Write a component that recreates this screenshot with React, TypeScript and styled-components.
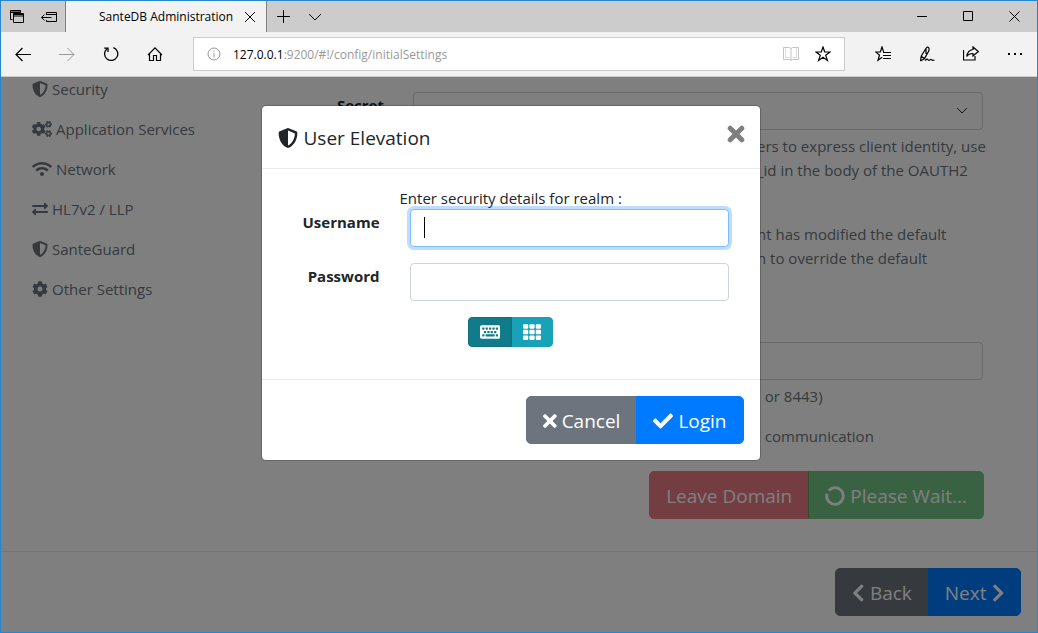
import React from "react";
import styled, { createGlobalStyle, css } from "styled-components";
import {
  FaCheck,
  FaChevronLeft,
  FaChevronRight,
  FaCog,
  FaCogs,
  FaExchangeAlt,
  FaKeyboard,
  FaShieldAlt,
  FaTh,
  FaTimes,
  FaWifi,
} from "react-icons/fa";

const GlobalStyle = createGlobalStyle`
  *, *::before, *::after { box-sizing: border-box; }
  body {
    margin: 0;
    font-family: "Open Sans", "Noto Sans", sans-serif;
    font-size: 15px;
    line-height: 24px;
    color: #212529;
    background: #fff;
  }
  button, input, select { font: inherit; margin: 0; }
`;

const BrowserWindow = styled.div`
  display: flex;
  flex-direction: column;
  min-height: 100vh;
  border: 1px solid #2587d3;
`;

/* Icons whose drawing is not square keep their own proportions */

const CogsIcon = styled(FaCogs)`
  aspect-ratio: 640 / 512;
`;
const WifiIcon = styled(FaWifi)`
  aspect-ratio: 640 / 512;
`;
const TimesIcon = styled(FaTimes)`
  aspect-ratio: 352 / 512;
`;
const BackIcon = styled(FaChevronLeft)`
  aspect-ratio: 320 / 512;
`;
const NextIcon = styled(FaChevronRight)`
  aspect-ratio: 320 / 512;
`;
const KeyboardIcon = styled(FaKeyboard)`
  aspect-ratio: 576 / 512;
`;

/* Browser chrome */

const TabBar = styled.div`
  display: flex;
  height: 31px;
  background: #ccc;
`;

const ChromeButton = styled.button<{ $width: number }>`
  display: flex;
  flex: none;
  align-items: center;
  justify-content: center;
  width: ${(p) => p.$width}px;
  padding: 0;
  border: 0;
  background: none;
  color: #000;

  &:disabled { color: #999; }
`;

const Tab = styled.div`
  display: flex;
  align-items: center;
  width: 202px;
  padding-left: 33px;
  border: solid #7f7f7f;
  border-width: 0 1px;
  background: #f2f2f2;
`;

const TabTitle = styled.span`
  flex: 1;
  overflow: hidden;
  white-space: nowrap;
  font-size: 12px;
  color: #000;
`;

const WindowControls = styled.div`
  display: flex;
  margin-left: auto;
`;

const Toolbar = styled.div`
  display: flex;
  height: 45px;
  border-bottom: 1px solid #ccc;
  background: #f2f2f2;
`;

const AddressBar = styled.div`
  display: flex;
  flex: 1;
  align-items: center;
  min-width: 0;
  height: 34px;
  margin: 5px 16px;
  padding: 0 5px 0 13px;
  border: 1px solid #ccc;
  background: #fff;
  font-size: 12px;
  color: #999;
`;

const Url = styled.span`
  flex: 1;
  margin-left: 12px;
  padding-top: 1px;
  overflow: hidden;
  white-space: nowrap;
`;

const UrlHost = styled.span`
  color: #000;
`;

/* Page */

const Page = styled.main`
  position: relative;
  display: flex;
  flex: 1;
  flex-direction: column;
  overflow: hidden;
`;

const Content = styled.div`
  display: flex;
  flex: 1;
  padding: 0 54px 32px 31px;
`;

const SideNav = styled.nav`
  display: flex;
  flex: none;
  flex-direction: column;
  gap: 16px;
  width: 220px;
`;

const iconStyle = css<{ $icon: number }>`
  & svg {
    flex: none;
    width: auto;
    height: ${(p) => p.$icon}px;
  }
`;

const NavLink = styled.a<{ $icon: number }>`
  display: flex;
  align-items: center;
  gap: 4px;
  color: #6c757d;
  text-decoration: none;
  ${iconStyle}
`;

const Settings = styled.form`
  display: grid;
  flex: 1;
  grid-template-columns: 132px minmax(0, 1fr);
  column-gap: 29px;
  align-content: start;
  min-width: 0;
  padding-top: 15px;
`;

const FieldLabel = styled.label`
  padding-top: 1px;
  text-align: right;
  font-weight: 700;
`;

const controlStyle = css`
  width: 100%;
  height: 38px;
  padding: 6px 12px;
  border: 1px solid #ced4da;
  border-radius: 4px;
  background: #fff;
  color: #495057;
`;

const SelectWrap = styled.div`
  position: relative;
`;

const Select = styled.select`
  ${controlStyle}
  appearance: none;
`;

const SelectArrow = styled.svg`
  position: absolute;
  top: 14px;
  right: 14px;
  pointer-events: none;
`;

const Input = styled.input`
  ${controlStyle}

  &:focus {
    border-color: #80bdff;
    box-shadow: 0 0 0 3px rgba(0, 123, 255, 0.25);
    outline: 0;
    caret-color: transparent;
  }
`;

const Hint = styled.p<{ $gap: number }>`
  grid-column: 2;
  margin: ${(p) => p.$gap}px 0 0 344px;
  white-space: nowrap;
  color: #6c757d;
`;

const PortField = styled.div`
  grid-column: 2;
  margin-top: 72px;
`;

const ButtonGroup = styled.div`
  display: flex;

  & > :not(:first-child) {
    margin-left: -1px;
    border-top-left-radius: 0;
    border-bottom-left-radius: 0;
  }
  & > :not(:last-child) {
    border-top-right-radius: 0;
    border-bottom-right-radius: 0;
  }
`;

const DomainActions = styled(ButtonGroup)`
  grid-column: 2;
  justify-content: flex-end;
  margin: 23px -1px 0 0;
`;

const tones = {
  secondary: "#6c757d",
  primary: "#007bff",
  danger: "#dc3545",
  success: "#28a745",
};

const Button = styled.button<{ $tone: keyof typeof tones; $icon: number }>`
  display: flex;
  align-items: center;
  gap: 5px;
  height: 48px;
  padding: 2px 16px 0;
  border: 1px solid ${(p) => tones[p.$tone]};
  border-radius: 5px;
  background: ${(p) => tones[p.$tone]};
  color: #fff;
  font-size: 19px;
  white-space: nowrap;
  ${iconStyle}

  &:disabled { opacity: 0.65; }
`;

const WizardFooter = styled.footer`
  display: flex;
  justify-content: flex-end;
  padding: 16px;
  border-top: 1px solid #e9ecef;
`;

/* Dialog */

const Backdrop = styled.div`
  position: absolute;
  inset: 0;
  padding: 28px 17px 28px 0;
  background: rgba(0, 0, 0, 0.5);
`;

const Dialog = styled.section`
  max-width: 500px;
  margin: 0 auto;
  border: 1px solid rgba(0, 0, 0, 0.2);
  border-radius: 5px;
  background: #fff;
  background-clip: padding-box;
`;

const DialogHeader = styled.header`
  display: flex;
  align-items: flex-start;
  justify-content: space-between;
  padding: 16px 15px 16px 16px;
  border-bottom: 1px solid #e9ecef;
`;

const DialogTitle = styled.h5<{ $icon: number }>`
  display: flex;
  align-items: center;
  gap: 6px;
  height: 30px;
  margin: 0;
  padding-top: 2px;
  font-size: 19px;
  font-weight: 400;
  line-height: 30px;
  ${iconStyle}
`;

const CloseButton = styled.button`
  display: flex;
  padding: 3px 0;
  border: 0;
  background: none;
  color: #7f7f7f;
`;

const DialogBody = styled.div`
  padding: 16px 31px 32px 16px;
`;

const Intro = styled.p`
  height: 24px;
  margin: 0 0 0 122px;
  padding-top: 1px;
`;

const LoginRow = styled.div`
  display: grid;
  grid-template-columns: 102px 1fr;
  column-gap: 30px;
  margin-bottom: 16px;
`;

const FocusedField = styled.div`
  position: relative;

  &::after {
    content: "";
    position: absolute;
    top: 8px;
    left: 14px;
    width: 1px;
    height: 21px;
    background: #000;
  }
`;

const InputModes = styled(ButtonGroup)`
  justify-content: center;
  margin-right: -15px;
`;

const ModeButton = styled.button<{ $active?: boolean; $icon: number }>`
  position: relative;
  z-index: ${(p) => (p.$active ? 1 : 0)};
  display: flex;
  align-items: center;
  height: 30px;
  padding: 0 11px;
  border: 1px solid ${(p) => (p.$active ? "#10707f" : "#17a2b8")};
  border-radius: 4px;
  background: ${(p) => (p.$active ? "#117a8b" : "#17a2b8")};
  color: #fff;
  ${iconStyle}
`;

const DialogFooter = styled.footer`
  display: flex;
  justify-content: flex-end;
  padding: 16px;
  border-top: 1px solid #e9ecef;
`;

type GlyphProps = { size: number; children: React.ReactNode; weight?: number };

const Glyph = ({ size, children, weight = 1 }: GlyphProps) => (
  <svg
    width={size}
    height={size}
    viewBox={`0 0 ${size} ${size}`}
    fill="none"
    stroke="currentColor"
    strokeWidth={weight}
    aria-hidden="true"
  >
    {children}
  </svg>
);

const navItems = [
  { label: "Security", Icon: FaShieldAlt },
  { label: "Application Services", Icon: CogsIcon },
  { label: "Network", Icon: WifiIcon },
  { label: "HL7v2 / LLP", Icon: FaExchangeAlt },
  { label: "SanteGuard", Icon: FaShieldAlt },
  { label: "Other Settings", Icon: FaCog },
];

const BrowserTabs = () => (
  <TabBar>
    <ChromeButton $width={32} aria-label="Tabs set aside">
      <Glyph size={16}>
        <path d="M3.5 10.5h-2v-9h10v2M1.5 3.5h10" />
        <path d="M4.5 4.5h10v9h-10zM4.5 7h10" />
        <path d="M1.5 2h10M4.5 5.5h10" />
      </Glyph>
    </ChromeButton>
    <ChromeButton $width={32} aria-label="Set these tabs aside">
      <Glyph size={16}>
        <path d="M5.5 6V3.500h10v9h-10V11M5.500 5.500h10M0.500 8.500h10M3.500 5.500l-3 3 3 3" />
      </Glyph>
    </ChromeButton>
    <Tab>
      <TabTitle>SanteDB Administration</TabTitle>
      <ChromeButton $width={32} aria-label="Close tab">
        <Glyph size={12}>
          <path d="M1 1l10 10M11 1L1 11" />
        </Glyph>
      </ChromeButton>
    </Tab>
    <ChromeButton $width={32} aria-label="New tab">
      <Glyph size={13}>
        <path d="M6.500 0v13M0 6.500h13" />
      </Glyph>
    </ChromeButton>
    <ChromeButton $width={32} aria-label="Tab previews">
      <Glyph size={14}>
        <path d="M1 4l6 6 6-6" />
      </Glyph>
    </ChromeButton>
    <WindowControls>
      <ChromeButton $width={46} aria-label="Minimize">
        <Glyph size={11}>
          <path d="M0 5.500h10" />
        </Glyph>
      </ChromeButton>
      <ChromeButton $width={46} aria-label="Maximize">
        <Glyph size={11}>
          <path d="M.5 .5h9v9h-9z" />
        </Glyph>
      </ChromeButton>
      <ChromeButton $width={46} aria-label="Close">
        <Glyph size={11}>
          <path d="M.5 .5l10 10M10.500 .5l-10 10" />
        </Glyph>
      </ChromeButton>
    </WindowControls>
  </TabBar>
);

const BrowserToolbar = () => (
  <Toolbar>
    <ChromeButton $width={44} aria-label="Go back">
      <Glyph size={16} weight={1.2}>
        <path d="M16 8.500H1M7.500 2L1 8.500 7.500 15" />
      </Glyph>
    </ChromeButton>
    <ChromeButton $width={44} aria-label="Go forward" disabled>
      <Glyph size={16}>
        <path d="M0 8.500h15M8.500 2L15 8.500 8.500 15" />
      </Glyph>
    </ChromeButton>
    <ChromeButton $width={44} aria-label="Refresh">
      <Glyph size={16} weight={1.3}>
        <path d="M10.300 1.600A6.600 6.600 0 1 1 3.800 2.900M1.200 2.100h3.800v3.900" />
      </Glyph>
    </ChromeButton>
    <ChromeButton $width={44} aria-label="Home">
      <Glyph size={16} weight={1.2}>
        <path d="M1 9l7-7.200L15 9M2.500 8v6.500h4v-5h3v5h4V8" />
      </Glyph>
    </ChromeButton>
    <AddressBar>
      <Glyph size={14}>
        <circle cx="7" cy="7" r="6" />
        <path d="M7 6v4.500M7 3.500v1.200" />
      </Glyph>
      <Url>
        <UrlHost>127.0.0.1</UrlHost>:9200/#!/config/initialSettings
      </Url>
      <ChromeButton $width={32} aria-label="Reading view" disabled>
        <Glyph size={16}>
          <g stroke="#c4c4c4">
            <path d="M.5 1.500h6l1.500 1 1.500-1h6v12h-6l-1.500 1-1.500-1h-6zM8 2.500v12" />
            <path d="M2.500 2v9.500h4l1 1M13.500 2v9.500h-4l-1 1" stroke="#dcdcdc" />
          </g>
        </Glyph>
      </ChromeButton>
      <ChromeButton $width={32} aria-label="Add to favorites">
        <Glyph size={16} weight={1.2}>
          <path d="M8 1l1.700 5H15l-4.300 3.200 1.700 5.200L8 11.200l-4.400 3.200 1.700-5.200L1 6h5.300z" />
        </Glyph>
      </ChromeButton>
    </AddressBar>
    <ChromeButton $width={44} aria-label="Hub">
      <Glyph size={16} weight={1.2}>
        <path d="M8.800 6.500L7 1 5.300 6H.8l3.700 3.200L3 14.300l4.200-3M8 6.500h8M8 9.500h8M8 12.500h8" />
      </Glyph>
    </ChromeButton>
    <ChromeButton $width={44} aria-label="Add notes">
      <Glyph size={16} weight={1.2}>
        <path d="M1.500 15l.7-4.800L7 2.300q2-2.300 3 0v2.200L5.500 12.500 1.500 15M2.200 10.200l3.300 2.300M7 3v5M6 14.500c1.500-1.500 2.300-1.700 2.800-1s1.200 1.200 2 .4 1.400-.8 2 0 1.400.6 2.700.1" />
      </Glyph>
    </ChromeButton>
    <ChromeButton $width={44} aria-label="Share">
      <Glyph size={16} weight={1.2}>
        <path d="M.5 4v10h11.500v-4M10 1l5.300 4.500L10 10V7.500c-3 0-5 1-6.200 3 .4-4 2.700-6.500 6.200-7z" />
      </Glyph>
    </ChromeButton>
    <ChromeButton $width={44} aria-label="Settings and more">
      <Glyph size={16}>
        <path d="M1 8h2M7 8h2M13 8h2" strokeWidth={2} />
      </Glyph>
    </ChromeButton>
  </Toolbar>
);

const SettingsForm = () => (
  <Settings>
    <FieldLabel htmlFor="secret-mode">Secret</FieldLabel>
    <SelectWrap>
      <Select id="secret-mode" />
      <SelectArrow width="14" height="10" viewBox="0 0 14 10" fill="none" stroke="#212529">
        <path d="M2 2l5 5 5-5" />
      </SelectArrow>
    </SelectWrap>
    <Hint $gap={4}>
      ers to express client identity, use
      <br />
      _id in the body of the OAUTH2
    </Hint>
    <Hint $gap={40}>
      nt has modified the default
      <br />n to override the default
    </Hint>
    <PortField>
      <Input aria-label="Port" />
    </PortField>
    <Hint $gap={4}>&nbsp;&nbsp;or 8443)</Hint>
    <Hint $gap={16}>&nbsp;&nbsp;communication</Hint>
    <DomainActions>
      <Button type="button" $tone="danger" $icon={20} disabled>
        Leave Domain
      </Button>
      <Button type="button" $tone="success" $icon={20} disabled>
        <Glyph size={20} weight={2.8}>
          <circle cx="10" cy="10" r="8.300" strokeDasharray="48.200 3.950" transform="rotate(222 10 10)" />
        </Glyph>
        Please Wait...
      </Button>
    </DomainActions>
  </Settings>
);

const ElevationDialog = () => (
  <Backdrop>
    <Dialog role="dialog" aria-labelledby="elevation-title">
      <DialogHeader>
        <DialogTitle id="elevation-title" $icon={20}>
          <FaShieldAlt /> User Elevation
        </DialogTitle>
        <CloseButton aria-label="Close dialog">
          <svg width="18" height="18" viewBox="0 0 18 18" stroke="currentColor" strokeWidth="5" strokeLinecap="round">
            <path d="M3.200 3.200l11.600 11.600M14.800 3.200L3.200 14.800" />
          </svg>
        </CloseButton>
      </DialogHeader>
      <DialogBody>
        <Intro>Enter security details for realm :</Intro>
        <LoginRow>
          <FieldLabel htmlFor="username">Username</FieldLabel>
          <FocusedField>
            <Input id="username" autoFocus />
          </FocusedField>
        </LoginRow>
        <LoginRow>
          <FieldLabel htmlFor="password">Password</FieldLabel>
          <Input id="password" type="password" />
        </LoginRow>
        <InputModes>
          <ModeButton $active $icon={18} aria-label="Keyboard">
            <KeyboardIcon />
          </ModeButton>
          <ModeButton $icon={18} aria-label="PIN pad">
            <FaTh />
          </ModeButton>
        </InputModes>
      </DialogBody>
      <DialogFooter>
        <ButtonGroup>
          <Button $tone="secondary" $icon={20}>
            <TimesIcon /> Cancel
          </Button>
          <Button $tone="primary" $icon={20}>
            <FaCheck /> Login
          </Button>
        </ButtonGroup>
      </DialogFooter>
    </Dialog>
  </Backdrop>
);

export default function App() {
  return (
    <>
      <GlobalStyle />
      <BrowserWindow>
        <BrowserTabs />
        <BrowserToolbar />
        <Page>
          <Content>
            <SideNav>
              {navItems.map(({ label, Icon }) => (
                <NavLink href="#" key={label} $icon={16}>
                  <Icon /> {label}
                </NavLink>
              ))}
            </SideNav>
            <SettingsForm />
          </Content>
          <WizardFooter>
            <ButtonGroup>
              <Button $tone="secondary" $icon={20}>
                <BackIcon /> Back
              </Button>
              <Button $tone="primary" $icon={20}>
                Next <NextIcon />
              </Button>
            </ButtonGroup>
          </WizardFooter>
          <ElevationDialog />
        </Page>
      </BrowserWindow>
    </>
  );
}
